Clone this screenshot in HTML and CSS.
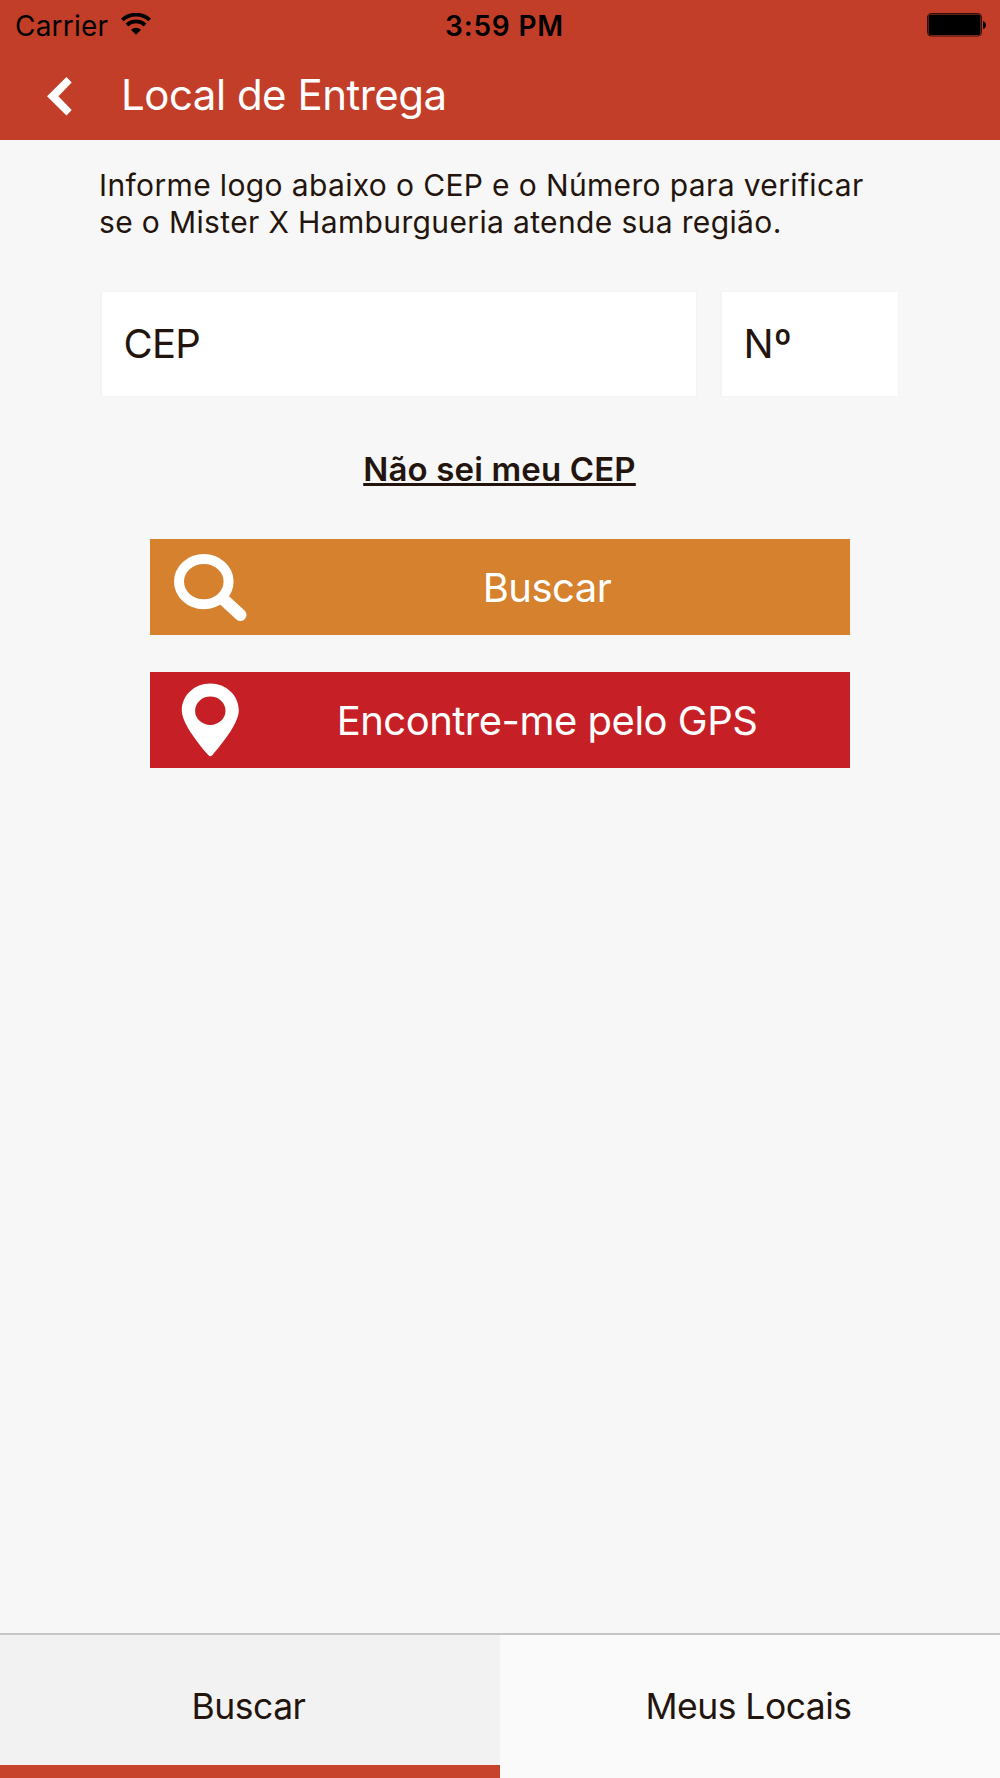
FILE: index.html
```
<!DOCTYPE html>
<html lang="pt-BR">
<head>
    <meta charset="UTF-8">
    <meta name="viewport" content="width=device-width, initial-scale=1.0">
    <title>Local de Entrega</title>
    <link rel="stylesheet" href="styles.css">
</head>
<body>
    <header>
        <div class="statusbar">
            <div class="carrier">
                <span>Carrier</span>
                <svg class="wifi" viewBox="0 0 30 22" width="30" height="22">
                    <path d="M1.3 6.9 A20.5 20.5 0 0 1 28.7 6.9" fill="none" stroke="#000" stroke-width="3.8"/>
                    <path d="M5.9 12 A13.5 13.5 0 0 1 24.1 12" fill="none" stroke="#000" stroke-width="3.8"/>
                    <path d="M10 16.8 A7.2 7.2 0 0 1 20 16.8 L15 21.8 Z" fill="#000"/>
                </svg>
            </div>
            <div class="clock">3:59 PM</div>
            <svg class="battery" viewBox="0 0 60 24" width="60" height="24">
                <rect x="0.5" y="0.5" width="54" height="22.5" rx="3.5" fill="none" stroke="#000" stroke-opacity="0.75"/>
                <rect x="1.5" y="1.5" width="52" height="20.5" rx="2" fill="#000"/>
                <path d="M56 8 Q59 9 59 12 Q59 15 56 16 Z" fill="#000"/>
            </svg>
        </div>
        <nav class="navbar">
            <svg class="back" viewBox="0 0 25 39" width="25" height="39">
                <path d="M19.5 0 L24.7 5.6 L11.4 19.3 L24.7 33 L19.5 38.6 L0 19.3 Z" fill="#fff"/>
            </svg>
            <h1>Local de Entrega</h1>
        </nav>
    </header>

    <main>
        <p class="info">Informe logo abaixo o CEP e o Número para verificar<br>se o Mister X Hamburgueria atende sua região.</p>
        <form>
            <div class="fields">
                <input class="cep" type="text" placeholder="CEP">
                <input class="numero" type="text" placeholder="Nº">
            </div>
            <a class="link" href="#">Não sei meu CEP</a>
            <button class="btn buscar" type="button">
                <svg viewBox="0 0 74 68" width="74" height="68">
                    <ellipse cx="29.8" cy="28.6" rx="24.8" ry="22.6" fill="none" stroke="#fff" stroke-width="10"/>
                    <path d="M48.5 45.5 L66.5 62" stroke="#fff" stroke-width="12" stroke-linecap="round"/>
                </svg>
                <span>Buscar</span>
            </button>
            <button class="btn gps" type="button">
                <svg viewBox="0 0 74 74" width="74" height="74">
                    <path fill-rule="evenodd" d="M36.3 0.5 C20.3 0.5 7.8 12.5 7.8 27.5 C7.8 39 21.5 57.5 34.2 72 Q36.3 74.4 38.4 72 C51 57.5 64.8 39 64.8 27.5 C64.8 12.5 52.3 0.5 36.3 0.5 Z M36.3 13.5 A15.2 14.2 0 0 1 36.3 41.9 A15.2 14.2 0 0 1 36.3 13.5 Z" fill="#fff"/>
                </svg>
                <span>Encontre-me pelo GPS</span>
            </button>
        </form>
    </main>

    <footer>
        <div class="tab active"><span>Buscar</span></div>
        <div class="tab locais"><span>Meus Locais</span></div>
    </footer>
</body>
</html>
```
FILE: styles.css
```
* {
    box-sizing: border-box;
}

body {
    margin: 0;
    height: 1778px;
    display: flex;
    flex-direction: column;
    background-color: #f7f7f7;
    color: #23150d;
    font-family: Inter, "Liberation Sans", sans-serif;
}

header {
    height: 140px;
    background-color: #c33e29;
}

.statusbar {
    display: grid;
    grid-template-columns: 1fr auto 1fr;
    align-items: center;
    height: 50px;
    padding: 1px 13px 0 15px;
    color: #000;
    font-size: 28px;
}

.carrier {
    display: flex;
    align-items: center;
    gap: 12.5px;
    letter-spacing: 0.2px;
}

.wifi {
    margin-bottom: 3px;
}

.clock {
    padding-left: 7px;
    font-weight: 600;
    letter-spacing: 0.8px;
}

.battery {
    justify-self: end;
    margin-bottom: 1px;
}

.navbar {
    display: flex;
    align-items: center;
    height: 90px;
    padding: 2px 0 0 47px;
    color: #fff;
}

.navbar h1 {
    margin: 0 0 4px 49px;
    font-size: 42px;
    font-weight: 400;
    letter-spacing: -0.5px;
}

main {
    flex: 1;
    padding: 27px 100px 0 99px;
}

.info {
    margin: 0;
    font-size: 30px;
    line-height: 37.3px;
    letter-spacing: 0.36px;
    white-space: nowrap;
}

form {
    display: flex;
    flex-direction: column;
    align-items: center;
    margin-left: 1px;
}

.fields {
    display: flex;
    gap: 23px;
    width: 800px;
    margin-top: 49.4px;
}

input {
    height: 106px;
    padding: 0 21.5px;
    border: 1px solid #f4f4f4;
    background-color: #fff;
    font-family: inherit;
    font-size: 40px;
    border-width: 1px 1px 1px 2px;
}

input::placeholder {
    color: #23150d;
    opacity: 1;
}

.cep {
    width: 597px;
    letter-spacing: -0.7px;
}

.numero {
    width: 179px;
}

.link {
    margin: 52px 1px 0 0;
    height: 40px;
    line-height: 40px;
    color: #23150d;
    font-size: 33px;
    font-weight: 600;
    letter-spacing: 0.15px;
    text-decoration-thickness: 3px;
    text-underline-offset: 2px;
    text-decoration-skip-ink: none;
}

.btn {
    display: flex;
    align-items: center;
    width: 700px;
    height: 96px;
    padding: 1px 4px 0 24px;
    border: none;
    color: #fff;
    font-family: inherit;
    font-size: 40px;
    letter-spacing: -0.5px;
}

.btn span {
    flex: 1;
    text-align: center;
}

.buscar {
    margin-top: 50px;
    background-color: #d6812d;
}

.gps {
    margin-top: 37px;
    background-color: #c62026;
}

footer {
    display: flex;
    height: 145px;
    border-top: 2px solid #c6c6c6;
}

.tab {
    display: flex;
    flex: 1;
    align-items: center;
    justify-content: center;
    padding: 12px 3px 0 0;
    background-color: #fafafa;
    font-size: 35.5px;
    letter-spacing: -0.5px;
}

.active {
    background-color: #f2f2f2;
    border-bottom: 13px solid #c7432b;
}

.locais {
    padding-bottom: 13px;
}
```
